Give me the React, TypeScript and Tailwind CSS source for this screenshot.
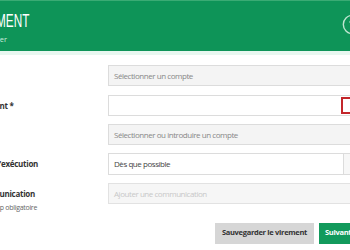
import React from 'react';

const font = { fontFamily: '"Open Sans", "Liberation Sans", sans-serif' };

function FieldLabel({ text, hint, tall }: { text?: string; hint?: string; tall?: boolean }) {
  return (
    <div className="w-[141px] shrink-0 flex flex-col pl-[8px]">
      <div className={`${tall ? 'h-[22px]' : 'h-[21px]'} flex items-center text-[8px] font-bold tracking-[-0.3px] text-[#333]`}>
        {text}
      </div>
      {hint && <div className="-mt-[1px] pl-[7px] text-[7px] tracking-[-0.3px] text-[#666]">{hint}</div>}
    </div>
  );
}

export default function App() {
  return (
    <div className="w-[350px] h-[250px] overflow-hidden bg-white" style={font}>
      <div className="w-[420px] -ml-[33px]">
        {/* header */}
        <div className="h-[51px] bg-[#0e9458] border-t border-[#3aab74] flex items-start justify-between">
          <div className="pt-[10px]">
            <div className="w-[62px] flex justify-end">
              <h1
                className="shrink-0 whitespace-nowrap origin-right scale-x-[0.62] text-[19px] leading-[20px] text-white font-normal"
                style={{ fontFamily: '"Liberation Sans Narrow", "Liberation Sans", sans-serif' }}
              >
                NOUVEAU VIREMENT
              </h1>
            </div>
            <div className="w-[40px] flex justify-end mt-[3px]">
              <span className="shrink-0 whitespace-nowrap text-[7.5px] text-[#cdebdc]">Compléter</span>
            </div>
          </div>
          <div className="pt-[13px] pr-[24px]">
            <svg width="21" height="21" viewBox="0 0 24 24" fill="none" stroke="#bfe5d0" strokeWidth="1.6" strokeLinecap="round">
              <circle cx="12" cy="12" r="10.5" />
              <path d="M9.2 9.2a2.9 2.9 0 0 1 5.6 1c0 1.9-2.8 2.6-2.8 2.6" />
              <path d="M12 16.8h.01" />
            </svg>
          </div>
        </div>
        <div className="h-[4px] bg-[#e8f7f0]" />

        {/* form */}
        <div className="pt-[10px] flex flex-col gap-[8px] text-[8px] tracking-[-0.45px]">
          <div className="flex">
            <FieldLabel />
            <div className="w-[260px] h-[21px] border border-[#dcdcdc] bg-[#f4f4f4] flex items-center pl-[5px] text-[#888]">
              Sélectionner un compte
            </div>
          </div>
          <div className="flex mt-[1px]">
            <FieldLabel text="Montant *" />
            <div className="w-[260px] h-[21px] border border-[#dcdcdc] bg-white flex items-center">
              <div className="flex-1" />
              <div className="w-[24px] h-[17px] border-2 border-[#c3262b] mr-[2px]" />
            </div>
          </div>
          <div className="flex">
            <FieldLabel />
            <div className="w-[260px] h-[21px] border border-[#dcdcdc] bg-[#f4f4f4] flex items-center pl-[5px] text-[#888]">
              Sélectionner ou introduire un compte
            </div>
          </div>
          <div className="flex">
            <FieldLabel text="Date d'exécution" tall />
            <div className="w-[260px] h-[22px] border border-[#dcdcdc] bg-white flex items-center text-[#444]">
              <div className="flex-1 pl-[5px]">Dès que possible</div>
              <div className="w-[24px] h-full border-l border-[#dcdcdc] bg-[#f7f7f7]" />
            </div>
          </div>
          <div className="flex">
            <FieldLabel text="Communication" hint="Champ obligatoire" />
            <div className="w-[260px] h-[21px] border border-[#e2e2e2] bg-[#f6f6f6] flex items-center pl-[5px] text-[#c8c8c8]">
              Ajouter une communication
            </div>
          </div>
        </div>

        {/* actions */}
        <div className="flex pl-[248px] mt-[9px] gap-[5px]">
          <button className="h-[21px] w-[99px] bg-[#d6d6d6] text-[#333] text-[7.5px] font-bold tracking-[-0.3px] flex items-center justify-center">
            Sauvegarder le virement
          </button>
          <button className="h-[21px] w-[60px] bg-[#129a5c] text-white text-[7.5px] font-bold tracking-[-0.3px] flex items-center pl-[6px]">
            Suivant
          </button>
        </div>
      </div>
    </div>
  );
}
